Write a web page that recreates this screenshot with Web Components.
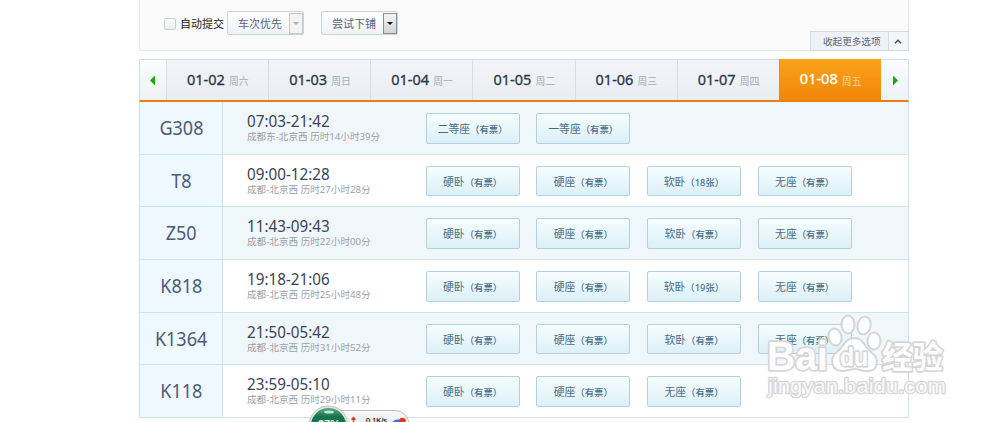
<!DOCTYPE html>
<html lang="zh-CN">
<head>
<meta charset="utf-8">
<title>车次查询</title>
<style>
  body {
    margin: 0;
    height: 422px;
    overflow: hidden;
    background: #fff;
    font-family: "Noto Sans", "Noto Sans CJK SC", sans-serif;
  }
</style>
</head>
<body>
<train-page></train-page>
<script>
// Text squeezed horizontally to a given width
class FitText extends HTMLElement {
  constructor() {
    super();
    this.attachShadow({ mode: "open" });
    this.shadowRoot.innerHTML = `
      <style>
        :host { display: block; white-space: nowrap; }
        span { display: inline-block; transform-origin: 0 50%; }
      </style>
      <span><slot></slot></span>
    `;
  }
  connectedCallback() {
    const w = Number(this.getAttribute("w"));
    const span = this.shadowRoot.querySelector("span");
    this.style.width = w + "px";
    span.style.transform = `scaleX(${w / span.offsetWidth})`;
  }
}

class SelectBox extends HTMLElement {
  constructor() {
    super();
    this.attachShadow({ mode: "open" });
    this.shadowRoot.innerHTML = `
      <style>
        :host {
          display: flex;
          box-sizing: border-box;
          width: 77px;
          height: 24px;
          border: 1px solid #c6d5e2;
          border-radius: 2px;
          background: linear-gradient(#fff, #eff3f8);
          color: #5c6478;
          font-size: 11px;
          line-height: 23px;
        }
        .label { flex: 1; padding-left: 10px; white-space: nowrap; }
        .arrow {
          box-sizing: border-box;
          width: 14px;
          margin: 0.5px 0.5px 0.5px 0;
          border: 1px solid #8e8e8e;
          background: linear-gradient(#f4f4f4, #d4d4d4);
          display: flex;
          justify-content: center;
          padding-top: 8px;
        }
        .arrow::after {
          content: "";
          height: 0;
          border: 3px solid transparent;
          border-top-color: #111;
          border-bottom: 0;
        }
        :host([disabled]) .arrow { border-color: #c8c8c8; background: #f3f3f3; }
        :host([disabled]) .arrow::after { border-top-color: #aaa; }
      </style>
      <span class="label"><slot></slot></span><span class="arrow"></span>
    `;
  }
}

class FilterBar extends HTMLElement {
  constructor() {
    super();
    this.attachShadow({ mode: "open" });
    this.shadowRoot.innerHTML = `
      <style>
        :host {
          display: flex;
          box-sizing: border-box;
          height: 51px;
          border: 1px solid #e0e8ec;
          border-top: 0;
          background: #fbfbfb;
          padding: 11px 0 0 24px;
        }
        .check {
          box-sizing: border-box;
          width: 12px;
          height: 12px;
          margin-top: 7px;
          border: 1px solid #c9d1da;
          border-radius: 2px;
          background: linear-gradient(#fff, #eceff2);
        }
        .auto { width: 47px; padding-left: 4px; font-size: 11px; line-height: 25px; color: #222; white-space: nowrap; }
        select-box + select-box { margin-left: 17px; }
        .more {
          box-sizing: border-box;
          display: flex;
          width: 99px;
          height: 20px;
          margin: 20px -1px 0 auto;
          border: 1px solid #cfdae3;
          background: #eef2f6;
          color: #5e6578;
          font-size: 9.6px;
          line-height: 19px;
        }
        .more span { flex: 1; padding-left: 12px; white-space: nowrap; }
        .more svg { border-left: 1px solid #cfdae3; background: #f3f6f9; }
      </style>
      <span class="check"></span><span class="auto">自动提交</span>
      <select-box disabled>车次优先</select-box>
      <select-box>尝试下铺</select-box>
      <div class="more"><span>收起更多选项</span>
        <svg width="19" height="18"><path d="M6 11.2 9 8.2 12 11.2" fill="none" stroke="#3d4560" stroke-width="1.4"/></svg>
      </div>
    `;
  }
}

class DateTabs extends HTMLElement {
  constructor() {
    super();
    this.attachShadow({ mode: "open" });
    const days = [
      ["01-02", "周六"], ["01-03", "周日"], ["01-04", "周一"], ["01-05", "周二"],
      ["01-06", "周三"], ["01-07", "周四"], ["01-08", "周五"],
    ];
    this.shadowRoot.innerHTML = `
      <style>
        :host {
          display: flex;
          box-sizing: border-box;
          height: 43px;
          margin-top: 8px;
          border: 1px solid #d5dee6;
          border-bottom: 2px solid #ef7c0e;
        }
        .arrow { background: linear-gradient(#fafcfd, #eef2f6); }
        .tab {
          box-sizing: border-box;
          flex: 1;
          display: flex;
          border-left: 1px solid #d7dee7;
          padding-left: 20px;
          background: linear-gradient(#f1f4f8, #eaeef3);
          color: #2f3549;
          font-size: 14.5px;
          -webkit-text-stroke: 0.3px;
          line-height: 39px;
        }
        .week { margin-left: 4px; color: #a5abb4; font-size: 9.8px; -webkit-text-stroke: 0; line-height: 44px; }
        .on { background: linear-gradient(#fba21a, #f1860a); border-color: #ee8a12; color: #fff; margin-top: -1px; }
        .on .week { color: #ffd391; line-height: 45px; }
      </style>
      <svg class="arrow" width="26" height="40"><path d="M15 15.500v10l-5-5z" fill="#1fa60c"/></svg>
      ${days.map(([d, w], i) => `
        <div class="tab ${i === 6 ? "on" : ""}"><fit-text w="38">${d}</fit-text><span class="week">${w}</span></div>
      `).join("")}
      <svg class="arrow" width="27" height="40"><path d="M12 15.500v10l5-5z" fill="#1fa60c"/></svg>
    `;
  }
}

class SeatButton extends HTMLElement {
  constructor() {
    super();
    this.attachShadow({ mode: "open" });
    this.shadowRoot.innerHTML = `
      <style>
        :host {
          box-sizing: border-box;
          width: 94px;
          height: 30.5px;
          border: 1px solid #b2d0e2;
          border-radius: 2px;
          background: linear-gradient(#f6fdff, #dbf0f7);
          color: #4a6e8a;
          display: flex;
          justify-content: center;
          font-size: 10.8px;
          line-height: 29.5px;
          white-space: nowrap;
        }
        small { font-size: 9.4px; font-weight: 500; }
      </style>
      <span><slot></slot><small></small></span>
    `;
  }
  connectedCallback() {
    this.shadowRoot.querySelector("small").textContent = `（${this.getAttribute("left")}）`;
  }
}

class TrainRow extends HTMLElement {
  constructor() {
    super();
    this.attachShadow({ mode: "open" });
  }
  connectedCallback() {
    const { code, time, from, spent, seats } = this.train;
    this.shadowRoot.innerHTML = `
      <style>
        :host {
          box-sizing: border-box;
          display: flex;
          height: 52.7px;
          border: 1px solid #cde3f0;
          border-top: 0;
          background: #fff;
        }
        :host(:nth-of-type(odd)) { background: #f0f7fb; }
        .code {
          box-sizing: border-box;
          width: 83px;
          border-right: 1px solid #cde3f0;
          background: #edf8ff;
          color: #4f5a75;
          font-size: 20px;
          line-height: 52px;
          text-align: center;
        }
        .code span { display: inline-block; transform: scaleX(0.9); }
        .info { width: 179.6px; box-sizing: content-box; padding: 8px 0 0 23.5px; margin-right: -0.5px; }
        .time { color: #3c4255; font-size: 16.5px; line-height: 21px; }
        .route { color: #9b9fa6; font-size: 9.4px; line-height: 12px; }
        .seats { display: flex; gap: 16.7px; padding-top: 11px; }
      </style>
      <div class="code"><span>${code}</span></div>
      <div class="info">
        <fit-text class="time" w="83">${time}</fit-text>
        <fit-text class="route" w="${from.length === 3 ? 133 : 124}">${from}-北京西 历时${spent}</fit-text>
      </div>
      <div class="seats">
        ${seats.map(([n, left]) => `<seat-button left="${left}">${n}</seat-button>`).join("")}
      </div>
    `;
  }
}

// Green ball with the network speed pill, cut by the bottom of the window
class SpeedBall extends HTMLElement {
  constructor() {
    super();
    this.attachShadow({ mode: "open" });
    this.shadowRoot.innerHTML = `
      <style>
        :host { position: absolute; left: 300px; top: 400px; width: 120px; height: 22px; overflow: hidden; }
        svg { display: block; }
        text { font-family: "Liberation Sans", sans-serif; }
      </style>
      <svg width="120" height="22">
        <defs>
          <linearGradient id="pill" x2="0" y2="1"><stop stop-color="#fafafa"/><stop offset="1" stop-color="#ddd"/></linearGradient>
          <linearGradient id="ball" x2="0" y2="1"><stop stop-color="#5cab84"/><stop offset=".25" stop-color="#15734a"/><stop offset="1" stop-color="#0e8a50"/></linearGradient>
        </defs>
        <rect x="20" y="10.5" width="89" height="28" rx="14" fill="url(#pill)" stroke="#bbb"/>
        <circle cx="28.500" cy="25.500" r="19.500" fill="#e3e6e4" stroke="#aaa" stroke-width=".7"/>
        <circle cx="28.500" cy="25.500" r="17.500" fill="url(#ball)"/>
        <ellipse cx="29" cy="12" rx="5" ry="1.500" fill="#e4f8ee" opacity=".8"/>
        <text x="18" y="28" font-size="11" font-weight="bold" fill="#fff">97%</text>
        <path d="M53.500 22v-4M51.500 19.500l2-2 2 2" fill="none" stroke="#e0352b" stroke-width="1.300"/>
        <text x="66" y="22.500" font-size="8" fill="#111" stroke="#111" stroke-width=".2" textLength="21" lengthAdjust="spacingAndGlyphs">0.1K/s</text>
        <ellipse cx="98" cy="23.500" rx="6" ry="4" fill="#3975d2"/>
        <circle cx="102.500" cy="21" r="3.300" fill="#e23328"/>
      </svg>
    `;
  }
}

class PawMark extends HTMLElement {
  constructor() {
    super();
    this.attachShadow({ mode: "open" });
    this.shadowRoot.innerHTML = `
      <style>
        :host { position: absolute; left: 760px; top: 310px; }
        svg { display: block; }
        g { fill: rgba(255, 255, 255, .85); stroke: #d6d6d6; stroke-width: 2; stroke-linejoin: round; }
        text { paint-order: stroke; font-family: "Liberation Sans", "Noto Sans CJK SC", sans-serif; font-weight: bold; }
        .big { stroke-width: 3.4; fill: #fdfdfd; }
      </style>
      <svg width="195" height="95">
        <g>
          <text class="big" x="7" y="60" font-size="41" textLength="61" lengthAdjust="spacingAndGlyphs">Bai</text>
          <ellipse cx="75" cy="27" rx="6.500" ry="8.500" transform="rotate(-15 75 27)"/>
          <ellipse cx="88" cy="14.500" rx="6.500" ry="9"/>
          <ellipse cx="104" cy="15.500" rx="6.500" ry="9" transform="rotate(12 104 15.500)"/>
          <ellipse cx="114" cy="31" rx="6.500" ry="8.500"/>
          <path d="M94 28C85 28 84 37 77 42C69 48 71 61 82 61C88 61 90 59 95 59C100 59 102 62 109 61C119 60 119 48 112 43C104 37 104 28 94 28Z"/>
          <text class="big" x="80" y="56" font-size="25" textLength="28" lengthAdjust="spacingAndGlyphs">du</text>
          <text class="big" x="122" y="58" font-size="31" textLength="61" lengthAdjust="spacingAndGlyphs">经验</text>
          <text x="8" y="83" font-size="20" stroke-width="2.400" textLength="178" lengthAdjust="spacingAndGlyphs" style="font-weight: 400">jingyan.baidu.com</text>
        </g>
      </svg>
    `;
  }
}

class TrainPage extends HTMLElement {
  constructor() {
    super();
    this.attachShadow({ mode: "open" });
    const has = "有票";
    const trains = [
      { code: "G308", time: "07:03-21:42", from: "成都东", spent: "14小时39分", seats: [["二等座", has], ["一等座", has]] },
      { code: "T8", time: "09:00-12:28", from: "成都", spent: "27小时28分", seats: [["硬卧", has], ["硬座", has], ["软卧", "18张"], ["无座", has]] },
      { code: "Z50", time: "11:43-09:43", from: "成都", spent: "22小时00分", seats: [["硬卧", has], ["硬座", has], ["软卧", has], ["无座", has]] },
      { code: "K818", time: "19:18-21:06", from: "成都", spent: "25小时48分", seats: [["硬卧", has], ["硬座", has], ["软卧", "19张"], ["无座", has]] },
      { code: "K1364", time: "21:50-05:42", from: "成都", spent: "31小时52分", seats: [["硬卧", has], ["硬座", has], ["软卧", has], ["无座", has]] },
      { code: "K118", time: "23:59-05:10", from: "成都", spent: "29小时11分", seats: [["硬卧", has], ["硬座", has], ["无座", has]] },
    ];
    this.shadowRoot.innerHTML = `
      <style>
        :host { display: block; position: relative; height: 422px; overflow: hidden; }
        main { width: 770px; margin-left: 139px; }
      </style>
      <main>
        <filter-bar></filter-bar>
        <date-tabs></date-tabs>
        <div class="rows"></div>
      </main>
      <speed-ball></speed-ball>
      <paw-mark></paw-mark>
    `;
    const rows = this.shadowRoot.querySelector(".rows");
    trains.forEach((train) => {
      const row = document.createElement("train-row");
      row.train = train;
      rows.appendChild(row);
    });
  }
}

customElements.define("fit-text", FitText);
customElements.define("select-box", SelectBox);
customElements.define("filter-bar", FilterBar);
customElements.define("date-tabs", DateTabs);
customElements.define("seat-button", SeatButton);
customElements.define("train-row", TrainRow);
customElements.define("speed-ball", SpeedBall);
customElements.define("paw-mark", PawMark);
customElements.define("train-page", TrainPage);
</script>
</body>
</html>
